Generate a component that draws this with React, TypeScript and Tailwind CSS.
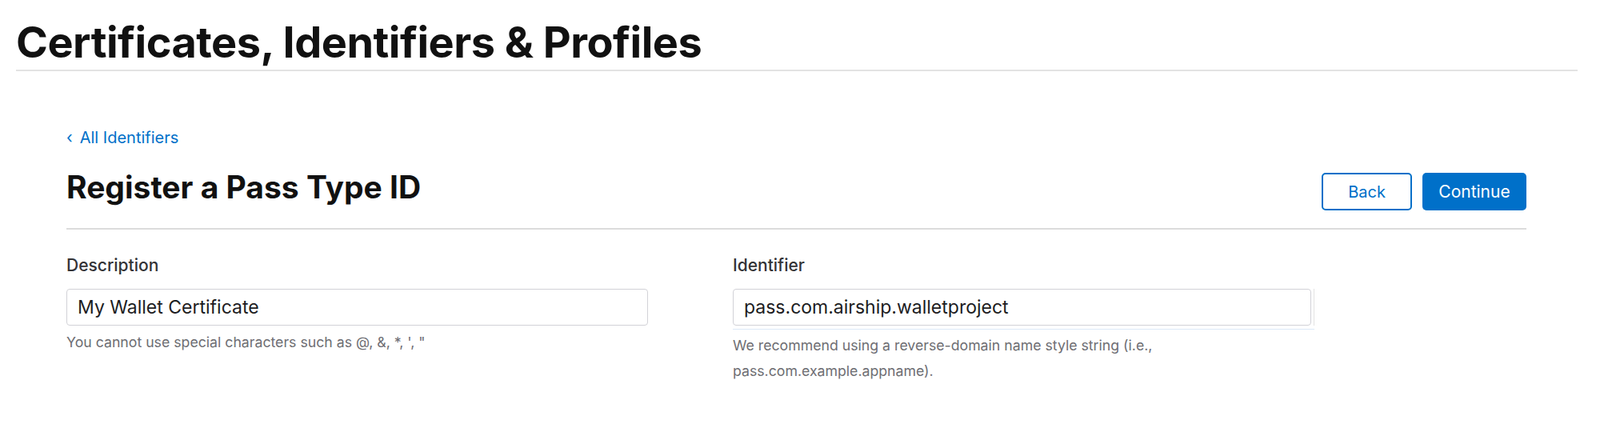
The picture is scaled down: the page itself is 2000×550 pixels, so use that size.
import { useState } from "react";

const hints = {
  description: `You cannot use special characters such as @, &, *, ', "`,
  identifier:
    "We recommend using a reverse-domain name style string (i.e., pass.com.example.appname).",
};

const Field = ({
  label,
  value,
  hint,
  focused,
}: {
  label: string;
  value: string;
  hint: string;
  focused?: boolean;
}) => {
  const [text, setText] = useState(value);

  return (
    <div className="w-[727px]">
      <label className="block text-[21px] leading-[24px] font-medium text-[#333336]">
        {label}
      </label>
      <div className="mt-[17px] flex items-stretch">
        <input
          type="text"
          value={text}
          onChange={(e) => setText(e.target.value)}
          className="w-[727px] h-[46px] px-[13px] border border-[#d2d2d7] rounded-[4px] text-[23px] text-[#1d1d1f] outline-none bg-white"
        />
        {focused && <div className="ml-[3px] w-px bg-[#e3e3e3]" />}
      </div>
      {focused ? (
        <div className="mt-[4px] h-px w-[727px] bg-[#dce9f7]" />
      ) : (
        <div className="mt-[5px]" />
      )}
      <p className="mt-[4px] text-[17.7px] leading-[32px] text-[#6e6e73]">{hint}</p>
    </div>
  );
};

export default function App() {
  return (
    <div className="w-[2000px] h-[550px] bg-white font-['Inter',sans-serif]">
      <div className="px-[20px] pt-[23px]">
        <h1 className="w-[1952px] pb-[4px] border-b-2 border-[#e3e3e3] text-[54px] leading-[60px] font-bold tracking-[-0.5px] text-[#111]">
          Certificates, Identifiers &amp; Profiles
        </h1>
      </div>

      <div className="pl-[83px] w-[1908px] pt-[71px]">
        <a href="#" className="flex items-center text-[20px] leading-[24px] text-[#0070c9]">
          <span className="mr-[9px]">‹</span>
          All Identifiers
        </a>

        <div className="mt-[30px] pb-[22px] flex items-start justify-between border-b-2 border-[#dcdcdc]">
          <h2 className="text-[39px] leading-[40px] font-bold text-[#111]">
            Register a Pass Type ID
          </h2>
          <div className="mt-[2px] flex gap-[13px]">
            <button className="w-[113px] h-[47px] rounded-[5px] border-2 border-[#0070c9] bg-white text-[20px] text-[#0070c9]">
              Back
            </button>
            <button className="w-[130px] h-[47px] rounded-[5px] bg-[#0070c9] text-[21px] text-white">
              Continue
            </button>
          </div>
        </div>

        <div className="mt-[33px] grid grid-cols-[727px_727px] gap-x-[106px]">
          <Field
            label="Description"
            value="My Wallet Certificate"
            hint={hints.description}
          />
          <Field
            label="Identifier"
            value="pass.com.airship.walletproject"
            hint={hints.identifier}
            focused
          />
        </div>
      </div>
    </div>
  );
}
